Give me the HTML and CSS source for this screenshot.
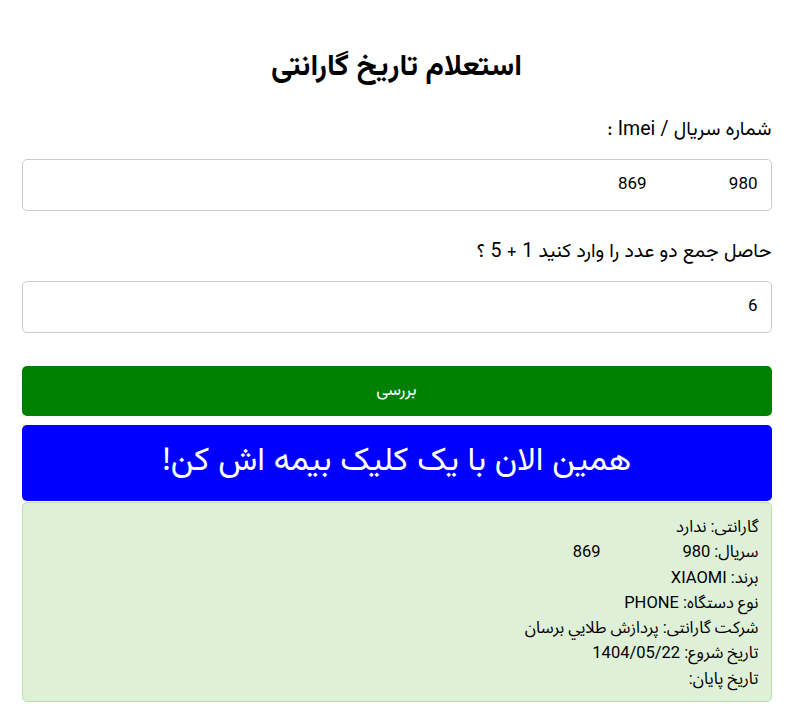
FILE: index.html
```html
<!DOCTYPE html>
<html lang="fa" dir="rtl">
<head>
<meta charset="utf-8">
<title>استعلام تاریخ گارانتی</title>
<link rel="stylesheet" href="styles.css">
</head>
<body>
<div class="container">
  <h1 class="title">استعلام تاریخ گارانتی</h1>
  <form class="form">
    <label class="label">شماره سریال / Imei :</label>
    <input class="field" type="text" value="980                  869">
    <label class="label">حاصل جمع دو عدد را وارد کنید 1 + 5 ؟</label>
    <input class="field" type="text" value="6">
    <button class="btn-check" type="button">بررسی</button>
  </form>
  <a class="promo">همین الان با یک کلیک بیمه اش کن!</a>
  <div class="result">
    <div>گارانتی: ندارد</div>
    <div>سریال: <span class="pre">980                    869</span></div>
    <div>برند: XIAOMI</div>
    <div>نوع دستگاه: PHONE</div>
    <div>شرکت گارانتی: پردازش طلايي برسان</div>
    <div>تاریخ شروع: 1404/05/22</div>
    <div>تاریخ پایان:</div>
  </div>
</div>
</body>
</html>
```
FILE: styles.css
```css
html, body {
  margin: 0;
  padding: 0;
  background: #fff;
}
body {
  font-family: "Vazirmatn", "Noto Sans Arabic", "Noto Naskh Arabic", "Noto Sans", sans-serif;
  color: #000;
}
.container {
  width: 750px;
  margin: 0 auto;
  padding-top: 47px;
}
.title {
  margin: 0 0 29px;
  text-align: center;
  font-size: 30px;
  font-weight: bold;
  line-height: 42px;
}
.form {
  display: flex;
  flex-direction: column;
}
.label {
  font-size: 19.5px;
  line-height: 24px;
  margin-bottom: 17px;
}
.field {
  box-sizing: border-box;
  height: 52px;
  border: 1px solid #ccc;
  border-radius: 5px;
  padding: 0 13px;
  font-family: inherit;
  font-size: 17px;
  direction: rtl;
  margin-bottom: 29px;
  background: #fff;
}
.btn-check {
  margin-top: 4px;
  height: 50px;
  border: none;
  border-radius: 5px;
  background: #008000;
  color: #fff;
  font-family: inherit;
  font-size: 17px;
}
.promo {
  display: block;
  margin-top: 9px;
  height: 76px;
  line-height: 74px;
  background: #0000ff;
  color: #fff;
  border-radius: 5px;
  text-align: center;
  font-size: 33px;
}
.result {
  margin-top: 1px;
  background: #dff0d8;
  border: 1px solid #b9dfaa;
  border-radius: 5px;
  padding: 11px 12px 10px;
  font-family: Roboto, "Noto Sans Arabic", Tahoma, "DejaVu Sans", sans-serif;
  font-size: 16.5px;
  line-height: 25.3px;
}
.pre {
  white-space: pre;
}
```
